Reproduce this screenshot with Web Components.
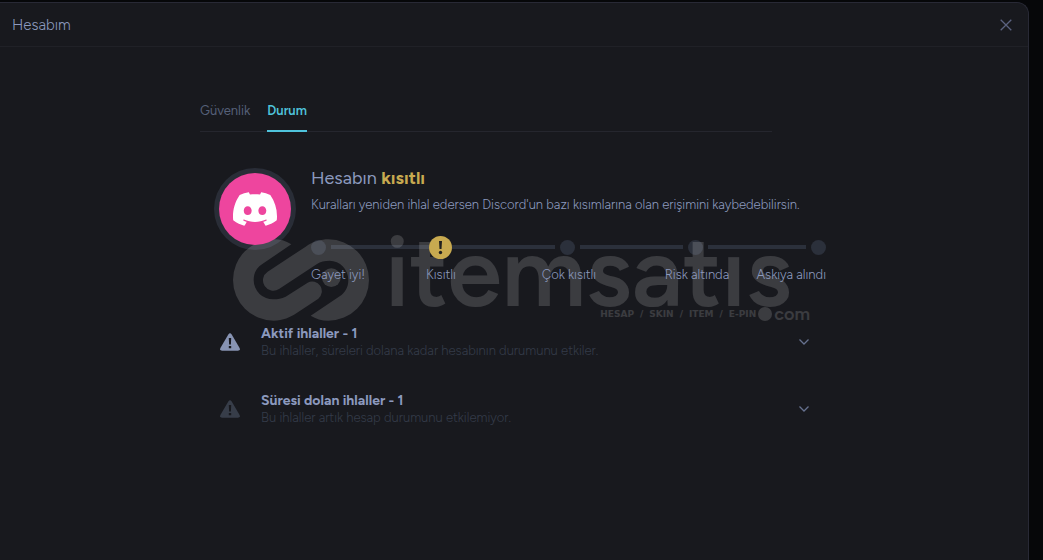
<!DOCTYPE html>
<html lang="tr">
<head>
<meta charset="utf-8">
<meta name="viewport" content="width=device-width, initial-scale=1">
<title>Hesabım</title>
<style>
  html { background: #060709; }
  body { margin: 0; font-family: Figtree, Lato, "Noto Sans", sans-serif; font-size: 13px; color: #8c99be;
    --surface: #18191e; --track: #2b303b; --gold: #c8aa50; --muted: #343b49; --accent: #4fc3dc; }
  b { color: var(--gold); font-weight: 700; }
</style>
</head>
<body>
<account-dialog heading="Hesabım">
  <tab-bar></tab-bar>
  <account-status>
    <span slot="title">Hesabın <b>kısıtlı</b></span>
    <span slot="note">Kuralları yeniden ihlal edersen Discord'un bazı kısımlarına olan erişimini kaybedebilirsin.</span>
    <status-steps></status-steps>
  </account-status>
  <violation-list>
    <violation-row tone="#8793b3"><span slot="title">Aktif ihlaller - 1</span><span slot="note">Bu ihlaller, süreleri dolana kadar hesabının durumunu etkiler.</span></violation-row>
    <violation-row tone="#373d49"><span slot="title">Süresi dolan ihlaller - 1</span><span slot="note">Bu ihlaller artık hesap durumunu etkilemiyor.</span></violation-row>
  </violation-list>
  <brand-watermark slot="overlay"></brand-watermark>
</account-dialog>
<script>
function define(name, html) {
  const t = document.createElement('template');
  t.innerHTML = html;
  customElements.define(name, class extends HTMLElement {
    constructor() {
      super();
      this.attachShadow({ mode: 'open' }).append(t.content.cloneNode(true));
    }
    connectedCallback() {
      const h = this.shadowRoot.querySelector('[data-heading]');
      if (h) h.textContent = this.getAttribute('heading');
      if (this.hasAttribute('tone')) this.style.setProperty('--tone', this.getAttribute('tone'));
    }
  });
}

define('account-dialog', `<style>
  :host { display: block; padding: 2px 14px 0 0; }
  section { box-sizing: border-box; min-height: calc(100vh - 2px); background: var(--surface); border: solid #282935; border-width: 1px 1px 0 0; border-radius: 0 12px 0 0; }
  header { display: flex; align-items: center; justify-content: space-between; height: 43px; padding: 0 15px 0 12px; border-bottom: 1px solid #202127; }
  h1 { margin: 0; font-size: 15px; font-weight: 300; line-height: 20px; }
  button { display: flex; padding: 0; border: 0; background: none; color: #5b6280; }
  main { position: relative; max-width: 628px; margin: 0 auto; padding: 54px 0 24px; }
</style>
<section><header><h1 data-heading></h1>
<button aria-label="Kapat"><svg width="14" height="14" viewBox="0 0 14 14" fill="none" stroke="currentColor" stroke-width="1.3"><path d="M1.7 1.7l10.6 10.6M12.3 1.7L1.7 12.3"/></svg></button></header>
<main><slot></slot><slot name="overlay"></slot></main></section>`);

define('tab-bar', `<style>
  :host { display: block; margin-right: 56px; }
  nav { display: flex; gap: 17px; border-bottom: 1px solid #25262e; }
  a { display: block; margin-bottom: -1px; padding-bottom: 9px; border-bottom: 2px solid transparent; line-height: 20px; font-size: 13px; font-weight: 400; color: #566079; text-decoration: none; }
  a[aria-current] { color: var(--accent); border-color: var(--accent); font-weight: 600; }
</style>
<nav><a href="#guvenlik">Güvenlik</a><a href="#durum" aria-current="page">Durum</a></nav>`);

define('account-status', `<style>
  :host { display: flex; gap: 15px; padding: 36px 2px 0 14px; }
  .avatar { flex: none; box-sizing: border-box; width: 82px; height: 82px; border-radius: 50%; background: #292d37; display: grid; place-items: center; }
  .disc { position: relative; z-index: 2; width: 72px; height: 72px; border-radius: 50%; background: #ee459e; display: grid; place-items: center; }
  .body { flex: 1; min-width: 0; }
  h2 { margin: 0; font-size: 18px; font-weight: 400; line-height: 20px; }
  p { margin: 7px 0 0; font-size: 13px; font-weight: 300; line-height: 20px; white-space: nowrap; }
</style>
<div class="avatar"><div class="disc"><svg width="44" height="44" viewBox="0 0 24 24" fill="#fff"><path d="M20.317 4.3698a19.7913 19.7913 0 00-4.8851-1.5152.0741.0741 0 00-.0785.0371c-.211.3753-.4447.8648-.6083 1.2495-1.8447-.2762-3.68-.2762-5.4868 0-.1636-.3933-.4058-.8742-.6177-1.2495a.077.077 0 00-.0785-.037 19.7363 19.7363 0 00-4.8852 1.515.0699.0699 0 00-.0321.0277C.5334 9.0458-.319 13.5799.0992 18.0578a.0824.0824 0 00.0312.0561c2.0528 1.5076 4.0413 2.4228 5.9929 3.0294a.0777.0777 0 00.0842-.0276c.4616-.6304.8731-1.2952 1.226-1.9942a.076.076 0 00-.0416-.1057c-.6528-.2476-1.2743-.5495-1.8722-.8923a.077.077 0 01-.0076-.1277c.1258-.0943.2517-.1923.3718-.2914a.0743.0743 0 01.0776-.0105c3.9278 1.7933 8.18 1.7933 12.0614 0a.0739.0739 0 01.0785.0095c.1202.099.246.1981.3728.2924a.077.077 0 01-.0066.1276 12.2986 12.2986 0 01-1.873.8914.0766.0766 0 00-.0407.1067c.3604.698.7719 1.3628 1.225 1.9932a.076.076 0 00.0842.0286c1.961-.6067 3.9495-1.5219 6.0023-3.0294a.077.077 0 00.0313-.0552c.5004-5.177-.8382-9.6739-3.5485-13.6604a.061.061 0 00-.0312-.0286zM8.02 15.3312c-1.1825 0-2.1569-1.0857-2.1569-2.419 0-1.3332.9555-2.4189 2.157-2.4189 1.2108 0 2.1757 1.0952 2.1568 2.419 0 1.3332-.9555 2.4189-2.1569 2.4189zm7.9748 0c-1.1825 0-2.1569-1.0857-2.1569-2.419 0-1.3332.9554-2.4189 2.1569-2.4189 1.2108 0 2.1757 1.0952 2.1568 2.419 0 1.3332-.946 2.4189-2.1568 2.4189Z"/></svg></div></div>
<div class="body"><h2><slot name="title"></slot></h2><p><slot name="note"></slot></p><slot></slot></div>`);

define('status-steps', `<style>
  :host { display: block; margin-top: 20px; }
  .track { display: flex; align-items: center; gap: 5px; height: 24px; }
  i { flex: none; width: 15px; height: 15px; border-radius: 50%; background: var(--track); }
  hr { flex: 104; height: 4px; margin: 0; border: 0; background: var(--track); }
  hr.edge { flex-grow: 98; }
  .now { position: relative; z-index: 2; flex: none; width: 23px; height: 23px; margin: 0 -5px; }
  ol { display: grid; grid-template-columns: minmax(0, 66fr) repeat(3, minmax(0, 128fr)) minmax(0, 65fr); margin: 6px 0 0; padding: 0; list-style: none; justify-items: center; position: relative; z-index: 2; line-height: 20px; font-size: 13px; font-weight: 300; white-space: nowrap; }
  li:first-child { justify-self: start; }
  li:last-child { justify-self: end; }
</style>
<div class="track"><i></i><hr class="edge"><svg class="now" viewBox="0 0 23 23"><circle cx="11.500" cy="11.500" r="11.500" fill="#c8aa50"/><path d="M10 5h3l-.5 8h-2z" fill="#20201f"/><circle cx="11.500" cy="16.500" r="1.700" fill="#20201f"/></svg><hr><i></i><hr><i></i><hr class="edge"><i></i></div>
<ol><li>Gayet iyi!</li><li aria-current="step">Kısıtlı</li><li>Çok kısıtlı</li><li>Risk altında</li><li>Askıya alındı</li></ol>`);

define('violation-list', `<style>
  :host { display: grid; gap: 34px; margin-top: 40px; padding: 0 18px 0 20px; position: relative; z-index: 2; }
</style><slot></slot>`);

define('violation-row', `<style>
  :host { display: block; }
  button { display: flex; align-items: center; width: 100%; padding: 0; border: 0; background: none; font: inherit; color: inherit; text-align: left; }
  .warn { flex: none; width: 20px; height: 18px; margin-right: 21px; color: var(--tone); }
  .text { flex: 1; display: grid; }
  strong { font-size: 14px; line-height: 18px; font-weight: 700; }
  small { font-size: 13px; font-weight: 300; line-height: 15px; color: var(--muted); }
</style>
<button aria-expanded="false"><svg class="warn" viewBox="0 0 20 18"><path d="M8.300 1.500Q10-.8 11.700 1.500L19.600 14.900Q20.600 17.600 17.900 17.700H2.100Q-.6 17.600.4 14.900Z" fill="currentColor"/><path d="M8.800 5h2.400l-.3 6.500H9.100zM8.800 13h2.400v2.300H8.800z" fill="#18191e"/></svg>
<span class="text"><strong><slot name="title"></slot></strong><small><slot name="note"></slot></small></span>
<svg width="12" height="8" viewBox="0 0 12 8" fill="none" stroke="#66718f" stroke-width="1.300"><path d="M1.500 1.500L6 6L10.500 1.500"/></svg></button>`);

define('brand-watermark', `<style>
  :host { position: absolute; left: 33px; top: 192px; z-index: 1; display: flex; gap: 16px; color: #fff; opacity: .15; pointer-events: none; white-space: nowrap; }
  .word { width: 425px; font-weight: 600; font-size: 98px; line-height: 66px; height: 68px; }
  .sub { display: flex; align-items: center; justify-content: flex-end; gap: 6px; height: 14px; font-family: "DejaVu Sans", sans-serif; font-size: 9px; font-weight: 700; }
  .com { display: flex; align-items: center; gap: 2px; margin-left: -4px; font-family: Figtree, Lato, sans-serif; font-size: 18px; font-weight: 600; line-height: 14px; }
  .com::before { content: ""; width: 14px; height: 14px; border-radius: 50%; background: #fff; }
</style>
<svg width="136" height="82" viewBox="0 0 408 244" fill="#fff"><path d="M175 15C158 4 140 0 122 0A122 122 0 0 0 122 244C150 244 172 234 190 222L256 178A29 29 0 0 0 224 130L158 172C145 178 135 180 122 180A58 58 0 0 1 62 122C62 100 72 84 88 74Z"/><path d="M233 229L320 171C336 160 346 144 346 122A58 58 0 0 0 290 64C275 64 262 67 252 74L138 149A31 31 0 0 1 104 97L218 22C240 7 265 0 286 0A122 122 0 0 1 286 244C266 244 248 238 233 229Z"/><circle cx="295" cy="115" r="28"/></svg>
<div><div class="word">itemsatıs</div><div class="sub"><span>HESAP</span><span>/</span><span>SKIN</span><span>/</span><span>ITEM</span><span>/</span><span>E-PIN</span><span class="com">com</span></div></div>`);
</script>
</body>
</html>
